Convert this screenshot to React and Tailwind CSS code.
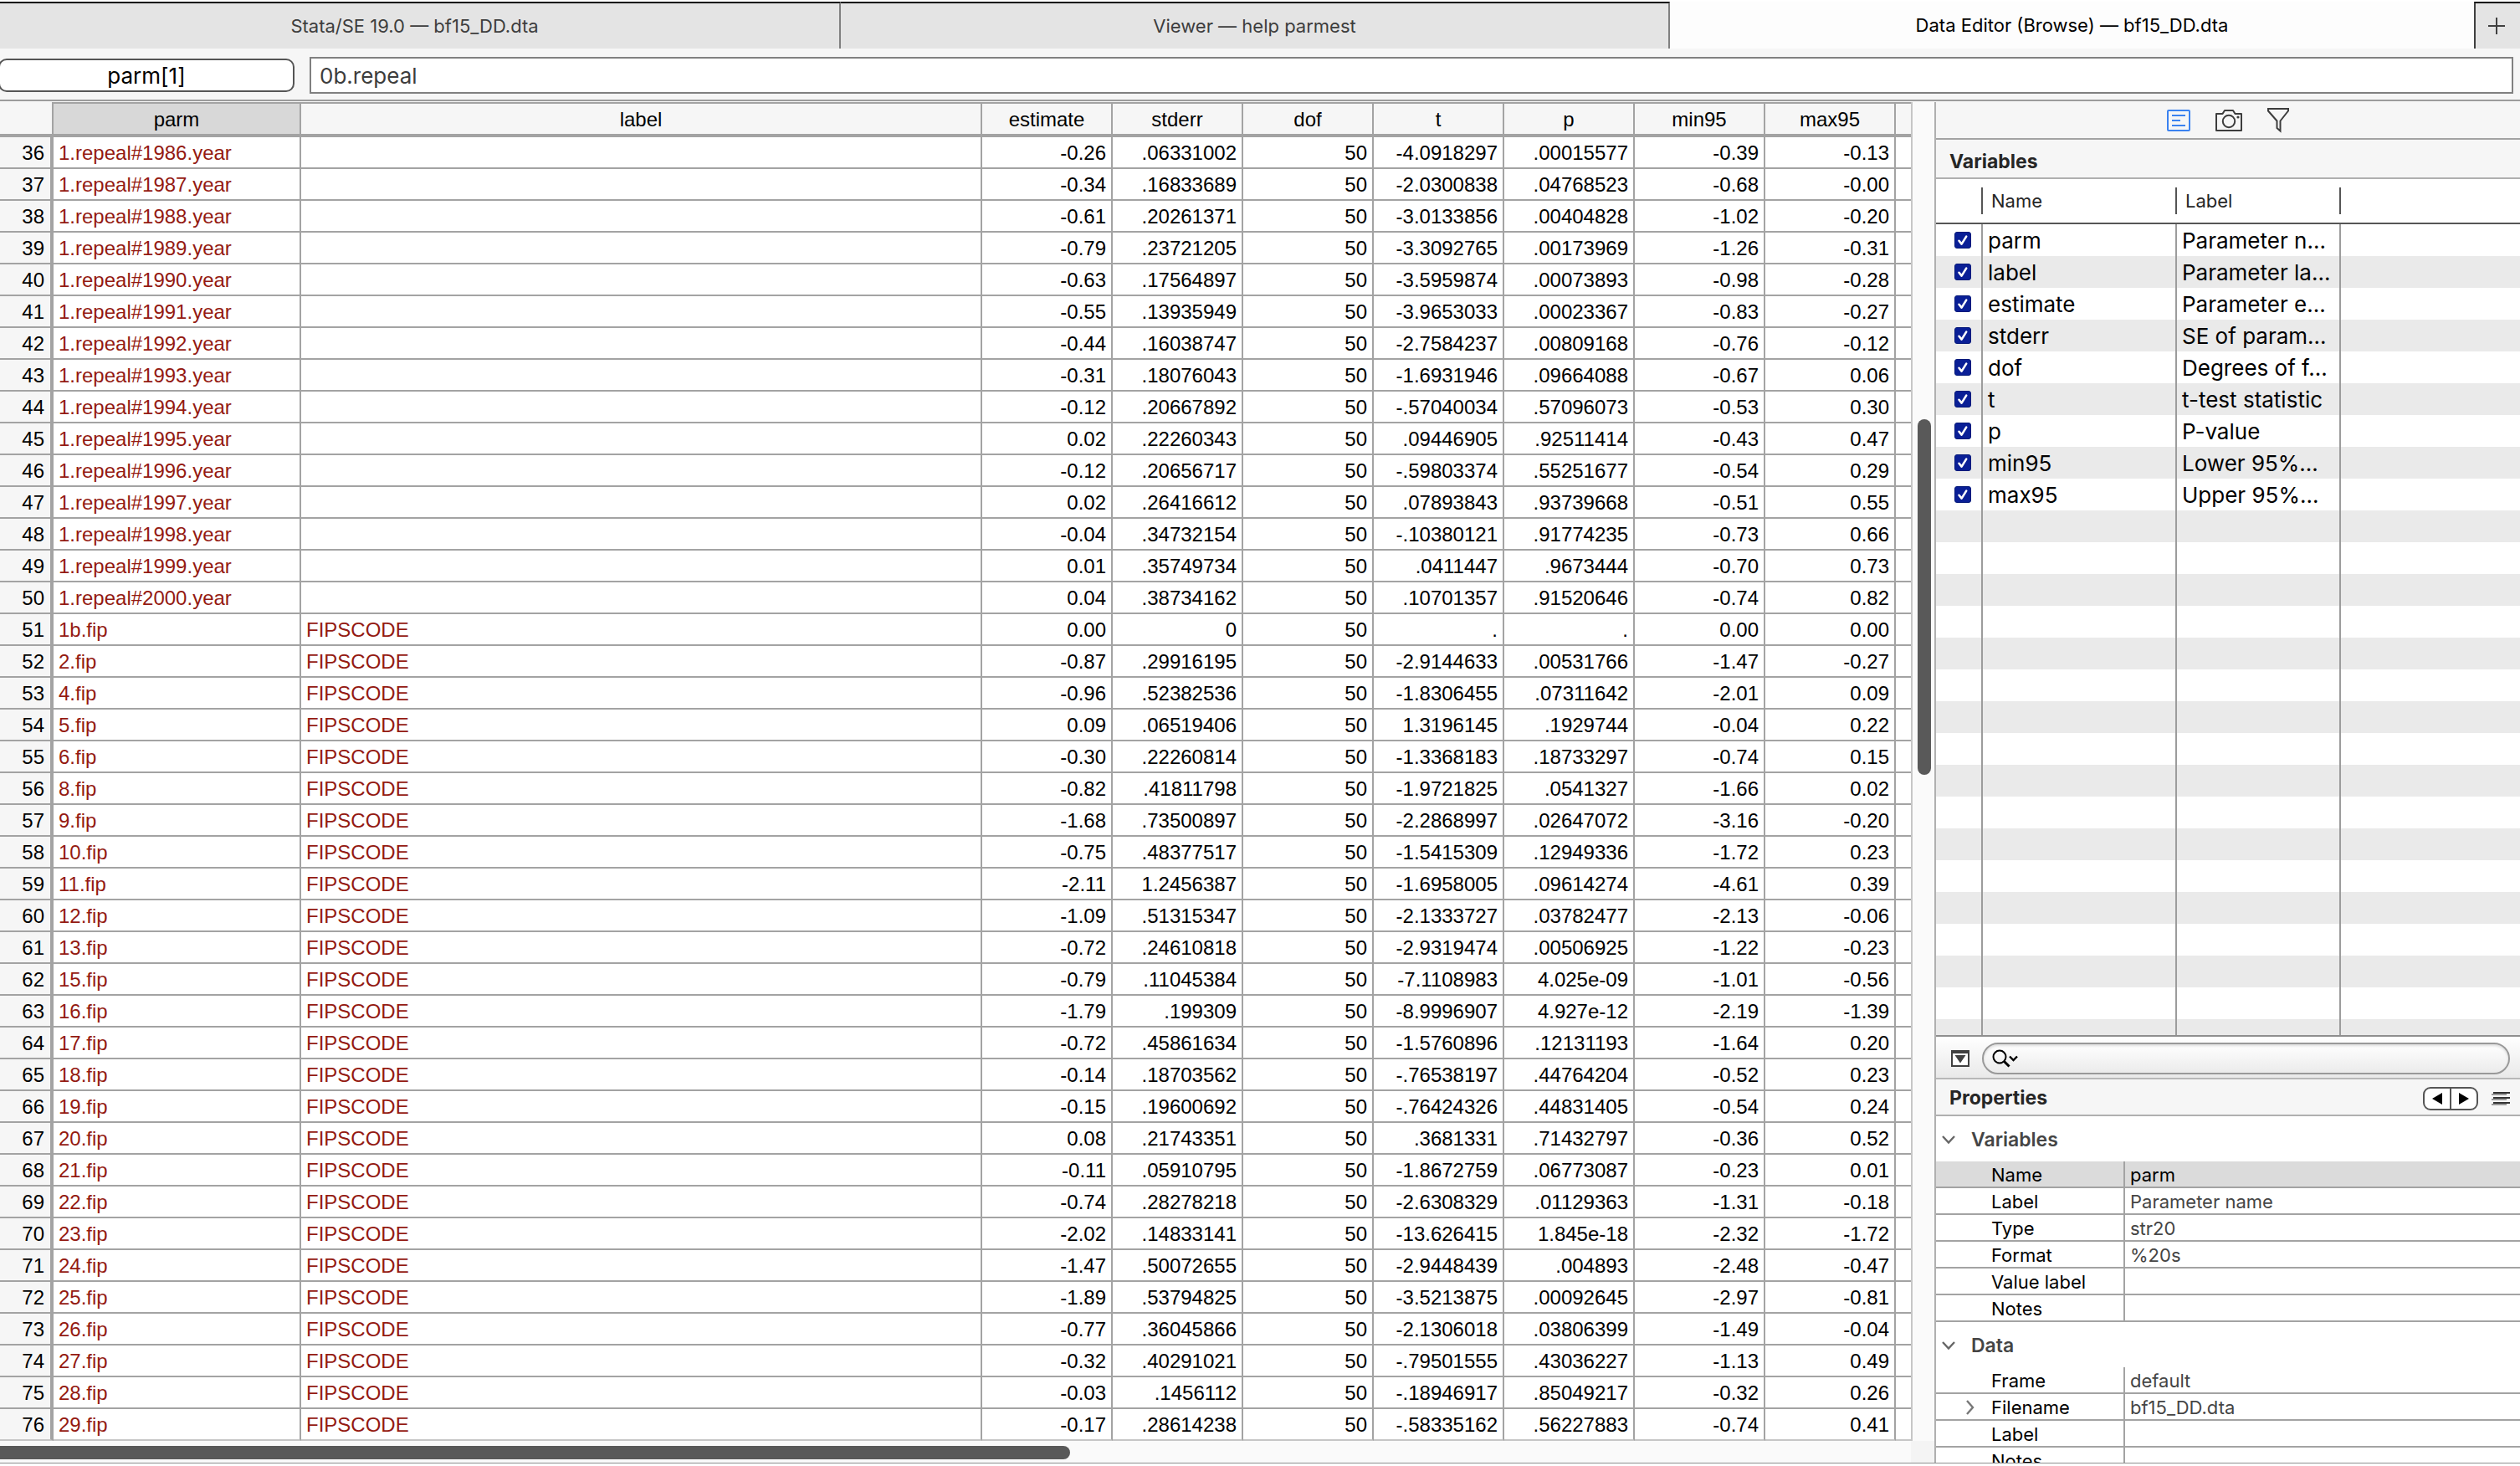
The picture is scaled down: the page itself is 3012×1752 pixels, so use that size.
import React, { useState } from 'react';

// --- Browser grid: one observation per line, starting at row 36 ---
// parm | label | estimate | stderr | dof | t | p | min95 | max95
const observations = `
1.repeal#1986.year||-0.26|.06331002|50|-4.0918297|.00015577|-0.39|-0.13
1.repeal#1987.year||-0.34|.16833689|50|-2.0300838|.04768523|-0.68|-0.00
1.repeal#1988.year||-0.61|.20261371|50|-3.0133856|.00404828|-1.02|-0.20
1.repeal#1989.year||-0.79|.23721205|50|-3.3092765|.00173969|-1.26|-0.31
1.repeal#1990.year||-0.63|.17564897|50|-3.5959874|.00073893|-0.98|-0.28
1.repeal#1991.year||-0.55|.13935949|50|-3.9653033|.00023367|-0.83|-0.27
1.repeal#1992.year||-0.44|.16038747|50|-2.7584237|.00809168|-0.76|-0.12
1.repeal#1993.year||-0.31|.18076043|50|-1.6931946|.09664088|-0.67|0.06
1.repeal#1994.year||-0.12|.20667892|50|-.57040034|.57096073|-0.53|0.30
1.repeal#1995.year||0.02|.22260343|50|.09446905|.92511414|-0.43|0.47
1.repeal#1996.year||-0.12|.20656717|50|-.59803374|.55251677|-0.54|0.29
1.repeal#1997.year||0.02|.26416612|50|.07893843|.93739668|-0.51|0.55
1.repeal#1998.year||-0.04|.34732154|50|-.10380121|.91774235|-0.73|0.66
1.repeal#1999.year||0.01|.35749734|50|.0411447|.9673444|-0.70|0.73
1.repeal#2000.year||0.04|.38734162|50|.10701357|.91520646|-0.74|0.82
1b.fip|FIPSCODE|0.00|0|50|.|.|0.00|0.00
2.fip|FIPSCODE|-0.87|.29916195|50|-2.9144633|.00531766|-1.47|-0.27
4.fip|FIPSCODE|-0.96|.52382536|50|-1.8306455|.07311642|-2.01|0.09
5.fip|FIPSCODE|0.09|.06519406|50|1.3196145|.1929744|-0.04|0.22
6.fip|FIPSCODE|-0.30|.22260814|50|-1.3368183|.18733297|-0.74|0.15
8.fip|FIPSCODE|-0.82|.41811798|50|-1.9721825|.0541327|-1.66|0.02
9.fip|FIPSCODE|-1.68|.73500897|50|-2.2868997|.02647072|-3.16|-0.20
10.fip|FIPSCODE|-0.75|.48377517|50|-1.5415309|.12949336|-1.72|0.23
11.fip|FIPSCODE|-2.11|1.2456387|50|-1.6958005|.09614274|-4.61|0.39
12.fip|FIPSCODE|-1.09|.51315347|50|-2.1333727|.03782477|-2.13|-0.06
13.fip|FIPSCODE|-0.72|.24610818|50|-2.9319474|.00506925|-1.22|-0.23
15.fip|FIPSCODE|-0.79|.11045384|50|-7.1108983|4.025e-09|-1.01|-0.56
16.fip|FIPSCODE|-1.79|.199309|50|-8.9996907|4.927e-12|-2.19|-1.39
17.fip|FIPSCODE|-0.72|.45861634|50|-1.5760896|.12131193|-1.64|0.20
18.fip|FIPSCODE|-0.14|.18703562|50|-.76538197|.44764204|-0.52|0.23
19.fip|FIPSCODE|-0.15|.19600692|50|-.76424326|.44831405|-0.54|0.24
20.fip|FIPSCODE|0.08|.21743351|50|.3681331|.71432797|-0.36|0.52
21.fip|FIPSCODE|-0.11|.05910795|50|-1.8672759|.06773087|-0.23|0.01
22.fip|FIPSCODE|-0.74|.28278218|50|-2.6308329|.01129363|-1.31|-0.18
23.fip|FIPSCODE|-2.02|.14833141|50|-13.626415|1.845e-18|-2.32|-1.72
24.fip|FIPSCODE|-1.47|.50072655|50|-2.9448439|.004893|-2.48|-0.47
25.fip|FIPSCODE|-1.89|.53794825|50|-3.5213875|.00092645|-2.97|-0.81
26.fip|FIPSCODE|-0.77|.36045866|50|-2.1306018|.03806399|-1.49|-0.04
27.fip|FIPSCODE|-0.32|.40291021|50|-.79501555|.43036227|-1.13|0.49
28.fip|FIPSCODE|-0.03|.1456112|50|-.18946917|.85049217|-0.32|0.26
29.fip|FIPSCODE|-0.17|.28614238|50|-.58335162|.56227883|-0.74|0.41
`.trim().split('\n').map((line) => line.split('|'));

const firstRow = 36;
const columns = ['parm', 'label', 'estimate', 'stderr', 'dof', 't', 'p', 'min95', 'max95'];

// --- Variables panel ---
const variables = [
  { name: 'parm', label: 'Parameter n...' },
  { name: 'label', label: 'Parameter la...' },
  { name: 'estimate', label: 'Parameter e...' },
  { name: 'stderr', label: 'SE of param...' },
  { name: 'dof', label: 'Degrees of f...' },
  { name: 't', label: 't-test statistic' },
  { name: 'p', label: 'P-value' },
  { name: 'min95', label: 'Lower 95%...' },
  { name: 'max95', label: 'Upper 95%...' },
];
const emptyRows = Array.from({ length: 17 });

// --- Properties panel ---
const variableProps = [
  ['Name', 'parm'],
  ['Label', 'Parameter name'],
  ['Type', 'str20'],
  ['Format', '%20s'],
  ['Value label', ''],
  ['Notes', ''],
];
const dataProps = [
  ['Frame', 'default'],
  ['Filename', 'bf15_DD.dta'],
  ['Label', ''],
  ['Notes', ''],
];

const TabBar = () => (
  <nav className="grid grid-cols-[1005fr_991fr_961fr_55px] h-14 mt-0.5 shrink-0 text-[22px] text-[#3d3d3d]">
    <button className="bg-[#e4e4e4] border-t-2 border-r-2 border-t-black border-r-[#808080] pr-3">Stata/SE 19.0 — bf15_DD.dta</button>
    <button className="bg-[#e4e4e4] border-t-2 border-r-2 border-t-black border-r-[#808080]">Viewer — help parmest</button>
    <button className="bg-[#fdfdfd] text-black">Data Editor (Browse) — bf15_DD.dta</button>
    <button aria-label="New tab" className="bg-[#e4e4e4] border-t-2 border-l-2 border-t-black border-l-[#404040] flex items-center justify-center pr-1">
      <svg width="22" height="22" viewBox="0 0 22 22" stroke="#404040" strokeWidth="2">
        <path d="M11 1v20M1 11h20" />
      </svg>
    </button>
  </nav>
);

const CellBar = () => (
  <div className="flex items-center h-[63px] pt-[3px] pr-2 gap-[18px] shrink-0 border-b-2 border-[#9c9c9c] text-[26px]">
    <button className="w-[354px] h-10 -ml-0.5 bg-white border-2 border-[#555] rounded-[10px] flex items-center justify-center">parm[1]</button>
    <input
      aria-label="Cell value"
      readOnly
      value="0b.repeal"
      className="flex-1 h-11 px-2.5 bg-white border-2 border-[#808080] text-[#3d3d3d] outline-none"
    />
  </div>
);

const Grid = () => (
  <table className="w-full table-fixed border-separate border-spacing-0 bg-white text-[24px] leading-[34px] font-['Liberation_Sans',Arial,sans-serif]">
    <colgroup>
      <col className="w-16" />
      <col className="w-[296px]" />
      <col />
      <col className="w-[156px]" />
      <col className="w-[156px]" />
      <col className="w-[156px]" />
      <col className="w-[156px]" />
      <col className="w-[156px]" />
      <col className="w-[156px]" />
      <col className="w-[156px]" />
      <col className="w-[18px]" />
    </colgroup>
    <thead>
      <tr className="bg-[#f6f6f6]">
        <td className="h-[42px] p-0 border-r-2 border-b-4 border-[#a3a3a3]" />
        {columns.map((col, i) => (
          <th
            key={col}
            className={`p-0 pt-0.5 font-normal border-t-2 border-b-4 border-r-2 border-[#a3a3a3] ${i === 0 ? 'bg-[#d8d8d8]' : ''}`}
          >
            {col}
          </th>
        ))}
        <td className="p-0 border-t-2 border-b-4 border-[#a3a3a3]" />
      </tr>
    </thead>
    <tbody>
      {observations.map((cells, r) => (
        <tr key={r} className="[&>*]:border-b-2 [&>*]:border-[#a3a3a3] last:[&>*]:border-b-[#c6c6c6]">
          <th className="p-0 pt-0.5 pr-[7px] text-right font-normal bg-[#f6f6f6] border-r-4">{firstRow + r}</th>
          {cells.map((value, i) => (
            <td
              key={i}
              className={`p-0 pt-0.5 border-r-2 ${i < 2 ? 'pl-1.5 text-left text-[#941a12]' : 'pr-1.5 text-right'}`}
            >
              {value}
            </td>
          ))}
          <td className="p-0" />
        </tr>
      ))}
    </tbody>
  </table>
);

const ViewIcons = () => (
  <div className="flex items-center justify-center gap-[30px] h-[45px] pt-px border-b-2 border-[#a3a3a3]">
    <button aria-label="Variables view">
      <svg width="28" height="26" viewBox="0 0 28 26" fill="none" stroke="#3b82f0" strokeWidth="2">
        <rect x="1" y="1" width="26" height="24" rx="1" />
        <path d="M6 7h16M6 13h10M6 19h16" />
      </svg>
    </button>
    <button aria-label="Snapshots">
      <svg width="32" height="26" viewBox="0 0 32 26" fill="none" stroke="#3d3d3d" strokeWidth="2">
        <path d="M1 5h7.500l2.500-4h10l2.500 4H31v20H1z" strokeLinejoin="round" />
        <circle cx="16" cy="14" r="7.2" />
        <circle cx="27" cy="9" r="1.6" fill="#3d3d3d" stroke="none" />
      </svg>
    </button>
    <button aria-label="Filter">
      <svg width="26" height="30" viewBox="0 0 26 30" fill="none" stroke="#3d3d3d" strokeWidth="2">
        <path d="M1 1h24v2.500L15.500 15.500v12l-4-3.500v-8.500L1 3.500z" />
      </svg>
    </button>
  </div>
);

const VariablesPanel = () => {
  const [checked, setChecked] = useState(variables.map(() => true));
  const toggle = (i) => setChecked(checked.map((c, j) => (j === i ? !c : c)));

  return (
    <section className="flex flex-col">
      <h2 className="h-[47px] pt-1 px-4 text-[23px] leading-[45px] font-bold text-[#262626] border-b-2 border-[#b0b0b0]">Variables</h2>
      <div className="h-[1025px] overflow-hidden bg-white border-b-2 border-[#8f8f8f]">
        <table className="w-full table-fixed border-separate border-spacing-0">
          <colgroup>
            <col className="w-14" />
            <col className="w-[232px]" />
            <col className="w-[196px]" />
            <col />
          </colgroup>
          <thead>
            <tr className="text-[22px] leading-8 text-[#262626] [&>*]:py-2.5 [&>*]:px-0 [&>*]:border-b-2 [&>*]:border-[#555]">
              <td><div className="h-8 border-r-2 border-[#555]" /></td>
              <th className="font-normal text-left"><div className="h-8 pl-2.5 border-r-2 border-[#555]">Name</div></th>
              <th className="font-normal text-left"><div className="h-8 pl-2.5 border-r-2 border-[#555]">Label</div></th>
              <td />
            </tr>
          </thead>
          <tbody className="text-[26px] leading-[36px]">
            {variables.map((v, i) => (
              <tr key={v.name} className="even:bg-[#eaeaea]">
                <td className="h-[38px] p-0 pl-[22px] border-r-2 border-[#9c9c9c]">
                  <span className="relative block size-5">
                    <input
                      id={`var-${v.name}`}
                      type="checkbox"
                      checked={checked[i]}
                      onChange={() => toggle(i)}
                      className="block appearance-none size-5 rounded-[3px] border border-[#061a7a] checked:bg-[#0a1f96]"
                    />
                    {checked[i] && (
                      <svg className="absolute inset-0 pointer-events-none" viewBox="0 0 20 20" fill="none" stroke="#fff" strokeWidth="2.6" strokeLinecap="round" strokeLinejoin="round">
                        <path d="M5.500 10.800L8.600 14.600L14.200 5.600" />
                      </svg>
                    )}
                  </span>
                </td>
                <td className="p-0 pt-0.5 pl-1.5 border-r-2 border-[#9c9c9c]">
                  <label htmlFor={`var-${v.name}`}>{v.name}</label>
                </td>
                <td className="p-0 pt-0.5 pl-1.5 border-r-2 border-[#9c9c9c] whitespace-nowrap">{v.label}</td>
                <td className="p-0" />
              </tr>
            ))}
            {emptyRows.map((_, i) => (
              <tr key={i} className="even:bg-[#eaeaea]">
                <td className="h-[38px] p-0 border-r-2 border-[#9c9c9c]" />
                <td className="p-0 border-r-2 border-[#9c9c9c]" />
                <td className="p-0 border-r-2 border-[#9c9c9c]" />
                <td className="p-0" />
              </tr>
            ))}
          </tbody>
        </table>
      </div>
      <div className="flex items-center h-[51px] pt-0.5 pl-[18px] pr-3 gap-[15px] bg-linear-to-b from-white to-[#e9e9e9] border-b-2 border-[#b8b8b8]">
        <button aria-label="Filter options">
          <svg width="22" height="20" viewBox="0 0 22 20">
            <rect x="1" y="1" width="20" height="18" fill="#fff" stroke="#404040" strokeWidth="2" />
            <path d="M0 0h22v4H0zM4.500 6h13l-6.500 9.500z" fill="#404040" />
          </svg>
        </button>
        <div className="flex-1 flex items-center gap-2 h-[38px] px-2.5 rounded-full border-2 border-[#999] bg-linear-to-b from-white to-[#ebebeb] shadow-[inset_0_2px_3px_#dcdcdc]">
          <svg width="32" height="22" viewBox="0 0 32 22" fill="none" stroke="#000" strokeWidth="2">
            <circle cx="9" cy="9" r="7.500" />
            <path d="M14.500 14.500l6 6" strokeWidth="3" />
            <path d="M21 8.500l4.500 4.500l4.500-4.500" strokeWidth="2.400" />
          </svg>
          <input aria-label="Filter variables" className="flex-1 bg-transparent outline-none text-[22px]" />
        </div>
      </div>
    </section>
  );
};

const PropGroup = ({ title, rows, selected, expandable }) => (
  <div>
    <h3 className="flex items-center gap-[19px] h-[54px] pt-0.5 pl-[7px] text-[23px] font-semibold text-[#454545]">
      <svg width="16" height="10" viewBox="0 0 16 10" fill="none" stroke="#666" strokeWidth="2.4">
        <path d="M1 1l7 7.500L15 1" />
      </svg>
      {title}
    </h3>
    <table className="w-full table-fixed border-separate border-spacing-0 text-[22px] leading-[28px]">
      <colgroup>
        <col className="w-[226px]" />
        <col />
      </colgroup>
      <tbody>
        {rows.map(([name, value]) => (
          <tr key={name} className={name === selected ? 'bg-[#dbdbdb] text-black' : 'text-[#454545]'}>
            <th className="h-8 p-0 pt-0.5 border-b-2 border-r-2 border-[#a3a3a3] font-normal text-left text-black">
              <div className="flex items-center">
                <span className="w-[66px] pl-9">
                  {name === expandable && (
                    <svg width="10" height="18" viewBox="0 0 10 18" fill="none" stroke="#777" strokeWidth="2.4">
                      <path d="M1 1l7 8l-7 8" />
                    </svg>
                  )}
                </span>
                {name}
              </div>
            </th>
            <td className="p-0 pt-0.5 pl-1.5 border-b-2 border-[#a3a3a3]">{value}</td>
          </tr>
        ))}
      </tbody>
    </table>
  </div>
);

const PropertiesPanel = () => (
  <section className="flex-1 min-h-0 overflow-hidden bg-white">
    <header className="flex items-center h-11 pt-0.5 pl-4 pr-3 gap-4 bg-[#f6f6f6] border-b-2 border-[#b0b0b0]">
      <h2 className="flex-1 text-[23px] font-bold text-[#262626]">Properties</h2>
      <div className="flex h-7 w-[66px] mt-0.5 rounded-[9px] border-2 border-[#555] bg-white">
        <button aria-label="Previous variable" className="flex-1 flex items-center justify-center border-r-2 border-[#555]">
          <svg width="12" height="14" viewBox="0 0 12 14"><path d="M12 0v14L0 7z" /></svg>
        </button>
        <button aria-label="Next variable" className="flex-1 flex items-center justify-center">
          <svg width="12" height="14" viewBox="0 0 12 14"><path d="M0 0v14l12-7z" /></svg>
        </button>
      </div>
      <button aria-label="Properties menu" className="mt-0.5">
        <svg width="22" height="16" viewBox="0 0 22 16">
          <path d="M2 0h20v2H2zM2 6h20v2H2zM2 12h20v2H2z" fill="#333" />
          <path d="M0 2h18v2H0zM0 8h18v2H0zM0 14h18v2H0z" fill="#999" />
        </svg>
      </button>
    </header>
    <PropGroup title="Variables" rows={variableProps} selected="Name" />
    <PropGroup title="Data" rows={dataProps} expandable="Filename" />
  </section>
);

export default function App() {
  return (
    <div className="flex flex-col h-screen overflow-hidden bg-white text-black font-[Inter,'Liberation_Sans',sans-serif]">
      <TabBar />
      <div className="flex-1 min-h-0 flex flex-col mb-[3px] bg-[#f6f6f6] border-b border-[#8f8f8f]">
        <CellBar />
        <div className="flex-1 min-h-0 flex pt-px">
          <main className="flex-1 min-w-0 flex flex-col">
            <div className="flex">
              <div className="flex-1 min-w-0"><Grid /></div>
              {/* vertical scrollbar */}
              <div className="w-7 pt-[379px] pl-1.5 bg-[#fafafa] border-l-2 border-[#c6c6c6]">
                <div className="w-4 h-[425px] rounded-full bg-[#595959]" />
              </div>
            </div>
            {/* horizontal scrollbar */}
            <div className="flex-1 flex bg-[#fafafa]">
              <div className="flex-1 pt-1.5">
                <div className="w-[56%] h-4 rounded-r-full bg-[#595959]" />
              </div>
              <div className="w-7 bg-[#f4f4f4]" />
            </div>
          </main>
          <aside className="w-[700px] shrink-0 flex flex-col border-l-2 border-[#b0b0b0]">
            <ViewIcons />
            <VariablesPanel />
            <PropertiesPanel />
          </aside>
        </div>
      </div>
    </div>
  );
}
